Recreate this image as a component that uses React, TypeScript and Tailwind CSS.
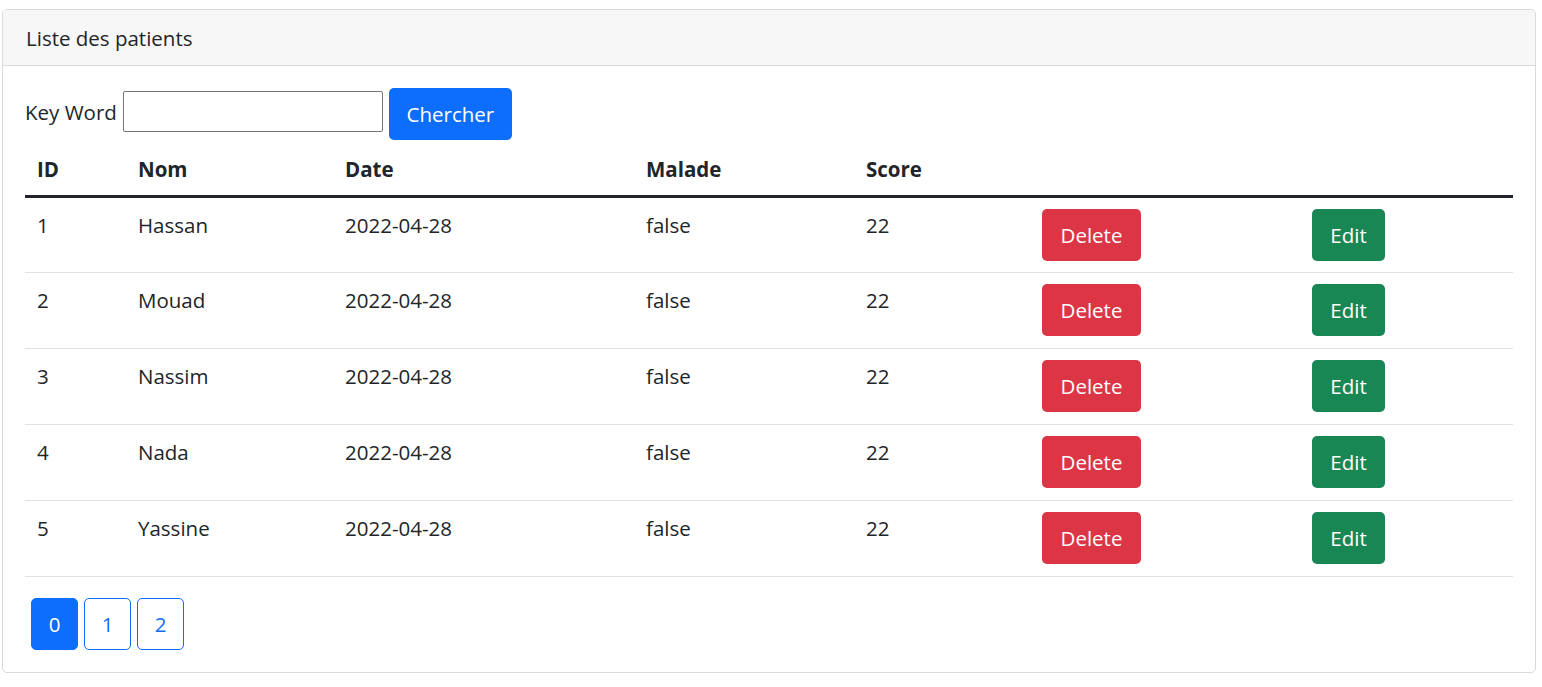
import { useState } from 'react';

type Patient = { id: number; nom: string; date: string; malade: boolean; score: number };

const patients: Patient[] = [
    { id: 1, nom: "Hassan", date: "2022-04-28", malade: false, score: 22 },
    { id: 2, nom: "Mouad", date: "2022-04-28", malade: false, score: 22 },
    { id: 3, nom: "Nassim", date: "2022-04-28", malade: false, score: 22 },
    { id: 4, nom: "Nada", date: "2022-04-28", malade: false, score: 22 },
    { id: 5, nom: "Yassine", date: "2022-04-28", malade: false, score: 22 },
];

export default function App() {
    const [keyword, setKeyword] = useState("");
    const [page, setPage] = useState(0);

    return (
        <div className="bg-white min-h-[687px] pt-[9px] px-[2px] text-[#212529] text-[20.5px] leading-[30px]" style={{ fontFamily: '"Segoe UI", "Open Sans", sans-serif' }}>
            <div className="w-[1534px] rounded-[5px] border border-[#dadada]">
                {/* En-tête de la carte */}
                <div className="h-[56px] bg-[#f7f7f7] border-b border-[#dadada] rounded-t-[5px] px-[23px] flex items-center">
                    Liste des patients
                </div>

                <div className="px-[22px] pt-[22px] pb-[22px]">
                    <form className="flex items-center h-[52px]" onSubmit={(e) => e.preventDefault()}>
                        <label className="mr-[6px] mt-[-4px]">Key Word</label>
                        <input
                            value={keyword}
                            onChange={(e) => setKeyword(e.target.value)}
                            className="w-[260px] h-[41px] border border-[#767676] rounded-[2px] mt-[-6px] px-2 outline-none"
                        />
                        <button type="submit" className="ml-[6px] w-[123px] h-[52px] rounded-[5px] bg-[#0d6efd] text-white">
                            Chercher
                        </button>
                    </form>

                    <table className="w-[1488px] table-fixed mt-[4px] border-collapse">
                        <colgroup>
                            <col className="w-[103px]" />
                            <col className="w-[207px]" />
                            <col className="w-[301px]" />
                            <col className="w-[220px]" />
                            <col className="w-[176px]" />
                            <col className="w-[270px]" />
                            <col className="w-[211px]" />
                        </colgroup>
                        <thead>
                            <tr className="h-[52px] border-b-[3px] border-[#212529] text-left font-bold">
                                <th className="pl-[12px] font-bold">ID</th>
                                <th className="pl-[10px] font-bold">Nom</th>
                                <th className="pl-[10px] font-bold">Date</th>
                                <th className="pl-[10px] font-bold">Malade</th>
                                <th className="pl-[10px] font-bold">Score</th>
                                <th></th>
                                <th></th>
                            </tr>
                        </thead>
                        <tbody>
                            {patients.map((p) => (
                                <tr key={p.id} className="h-[76px] border-b border-[#dee2e6] align-top">
                                    <td className="pl-[12px] pt-[12px]">{p.id}</td>
                                    <td className="pl-[10px] pt-[12px]">{p.nom}</td>
                                    <td className="pl-[10px] pt-[12px]">{p.date}</td>
                                    <td className="pl-[10px] pt-[12px]">{String(p.malade)}</td>
                                    <td className="pl-[10px] pt-[12px]">{p.score}</td>
                                    <td className="pl-[10px] pt-[11px]">
                                        <button className="w-[99px] h-[52px] rounded-[5px] bg-[#dc3545] text-white">Delete</button>
                                    </td>
                                    <td className="pl-[10px] pt-[11px]">
                                        <button className="w-[73px] h-[52px] rounded-[5px] bg-[#198754] text-white">Edit</button>
                                    </td>
                                </tr>
                            ))}
                        </tbody>
                    </table>

                    {/* Pagination */}
                    <ul className="flex gap-[6px] mt-[21px] ml-[6px]">
                        {[0, 1, 2].map((i) => (
                            <li key={i}>
                                <button
                                    onClick={() => setPage(i)}
                                    className={
                                        i === page
                                            ? "w-[47px] h-[52px] rounded-[5px] border border-[#0d6efd] bg-[#0d6efd] text-white"
                                            : "w-[47px] h-[52px] rounded-[5px] border border-[#0d6efd] bg-white text-[#0d6efd]"
                                    }
                                >
                                    {i}
                                </button>
                            </li>
                        ))}
                    </ul>
                </div>
            </div>
        </div>
    );
}
